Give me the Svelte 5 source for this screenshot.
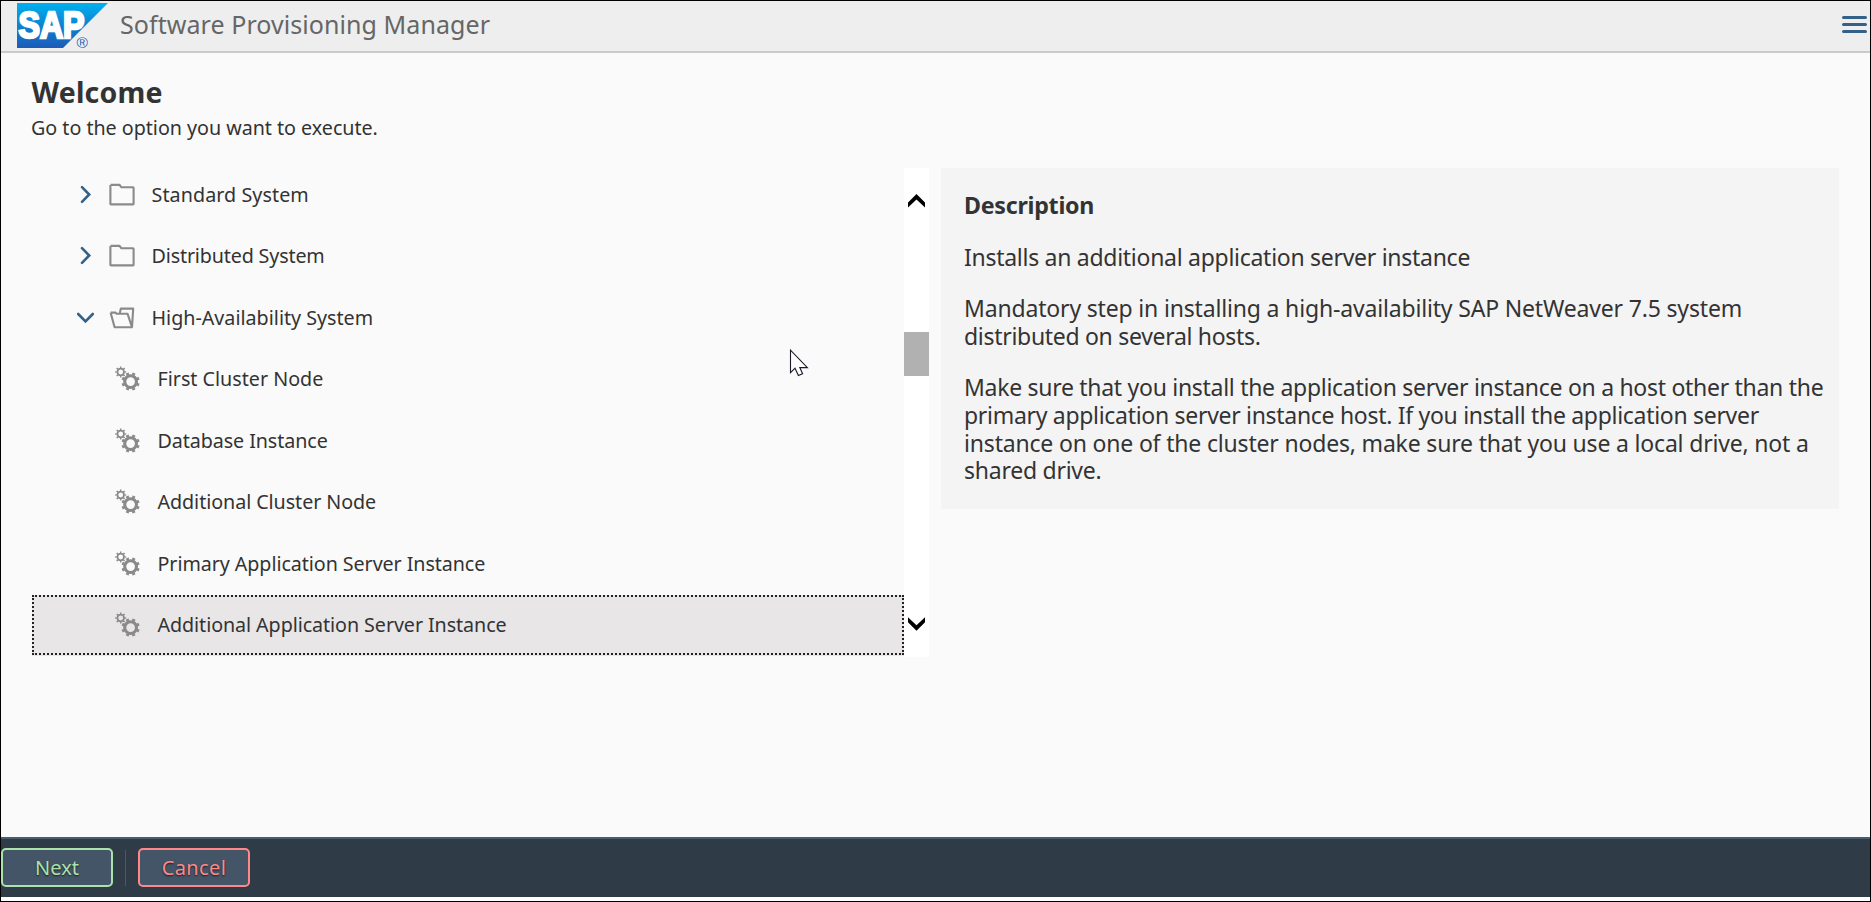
<script>
  const nodes = [
    { label: 'Standard System', kind: 'closed', track: 0.08 },
    { label: 'Distributed System', kind: 'closed', track: -0.15 },
    { label: 'High-Availability System', kind: 'open', track: 0 },
    { label: 'First Cluster Node', kind: 'task', track: 0 },
    { label: 'Database Instance', kind: 'task', track: -0.08 },
    { label: 'Additional Cluster Node', kind: 'task', track: -0.06 },
    { label: 'Primary Application Server Instance', kind: 'task', track: -0.07 },
    { label: 'Additional Application Server Instance', kind: 'task', track: -0.07 },
  ];
  let selected = $state(7);

  const paragraphs = [
    [['Installs an additional application server instance', -0.28]],
    [
      ['Mandatory step in installing a high-availability SAP NetWeaver 7.5 system', -0.17],
      ['distributed on several hosts.', -0.3],
    ],
    [
      ['Make sure that you install the application server instance on a host other than the', -0.29],
      ['primary application server instance host. If you install the application server', -0.3],
      ['instance on one of the cluster nodes, make sure that you use a local drive, not a', -0.18],
      ['shared drive.', -0.25],
    ],
  ];
</script>

<div class="window">
  <header>
    <svg class="logo" width="92" height="46" viewBox="0 0 92 46">
      <defs>
        <linearGradient id="sap" x1="0" y1="0" x2="0" y2="1">
          <stop offset="0" stop-color="#00b1ee" />
          <stop offset="0.5" stop-color="#0c83d2" />
          <stop offset="1" stop-color="#1e5bb8" />
        </linearGradient>
      </defs>
      <path d="M0 0H91L46 45H0Z" fill="url(#sap)" />
      <text class="brand" x="1.5" y="35" textLength="66" lengthAdjust="spacingAndGlyphs">SAP</text>
      <text class="reg" x="59.5" y="45">®</text>
    </svg>
    <span class="title">Software Provisioning Manager</span>
    <svg class="menu" width="25" height="18" viewBox="0 0 25 18">
      <path d="M1.5 1.5H23.5M1.5 8.5H23.5M1.5 15.5H23.5" stroke="#346187" stroke-width="3" stroke-linecap="round" />
    </svg>
  </header>

  <main>
    <h1>Welcome</h1>
    <p class="lead">Go to the option you want to execute.</p>

    <div class="columns">
      <div class="tree">
        <div class="rows">
          {#each nodes as node, i}
            <!-- svelte-ignore a11y_click_events_have_key_events, a11y_no_static_element_interactions -->
            <div class="row {node.kind}" class:selected={i === selected} onclick={() => (selected = i)}>
              {#if node.kind === 'closed'}
                <svg class="chevron" width="20" height="20" viewBox="0 0 20 20">
                  <path d="M6 2.2L13.2 9.5L6 16.8" />
                </svg>
                <svg class="icon" width="26" height="24" viewBox="0 0 26 24">
                  <path d="M1.5 1.9H10.6L12.2 4.2H24Q24.6 4.2 24.6 4.8V20.8Q24.6 21.4 24 21.4H2Q1.4 21.4 1.4 20.8V1.9" />
                </svg>
              {:else if node.kind === 'open'}
                <svg class="chevron" width="20" height="20" viewBox="0 0 20 20">
                  <path d="M2.2 6L9.5 13.3L16.8 6" />
                </svg>
                <svg class="icon" width="26" height="24" viewBox="0 0 26 24">
                  <path d="M1.6 6.6H6.4L7.6 7.8H18.6L23 21.2H5.6L1.6 6.6M10.8 7.2L11.8 2.6H24.2L23 21.2" />
                </svg>
              {:else}
                <svg class="gears" width="26" height="26" viewBox="0 0 26 26">
                  <circle cx="5.7" cy="6" r="3.3" stroke-width="1.8" />
                  <circle cx="5.7" cy="6" r="4.7" stroke-width="1.7" pathLength="80" stroke-dasharray="4 6" stroke-dashoffset="2" />
                  <circle cx="15.6" cy="15.6" r="5.9" stroke-width="3.1" />
                  <circle cx="15.6" cy="15.6" r="7.9" stroke-width="2.6" pathLength="80" stroke-dasharray="4.6 5.4" stroke-dashoffset="-2.7" />
                </svg>
              {/if}
              <span style:letter-spacing="{node.track}px">{node.label}</span>
            </div>
          {/each}
        </div>
        <div class="scrollbar">
          <svg class="up" width="17" height="14" viewBox="0 0 17 14">
            <path d="M0 8.5L8.5 0L17 8.5V13.5L8.5 5.4L0 13.5Z" />
          </svg>
          <div class="thumb"></div>
          <svg class="down" width="17" height="14" viewBox="0 0 17 14">
            <path d="M0 5.2L8.5 13.7L17 5.2V0.3L8.5 8.3L0 0.3Z" />
          </svg>
        </div>
      </div>

      <section>
        <h2>Description</h2>
        {#each paragraphs as lines}
          <p>
            {#each lines as [text, track]}
              <span style:letter-spacing="{track}px">{text}</span>
            {/each}
          </p>
        {/each}
      </section>
    </div>
  </main>

  <footer>
    <button class="next">Next</button>
    <i></i>
    <button class="cancel">Cancel</button>
  </footer>

  <svg class="cursor" width="20" height="29" viewBox="0 0 20 29">
    <path d="M1.5 1.2V23.6L6 19.2L9.4 26.6L13.6 24.8L10.8 18.6H18.4Z" fill="#fff" stroke="#1a1a28" stroke-width="1.1" />
  </svg>
</div>

<style>
  :global(body) { margin: 0; background: #fff; }
  .window {
    position: relative;
    box-sizing: border-box;
    width: 1871px;
    height: 902px;
    border: 1px solid #000;
    background: #fafafa;
    color: #333;
    font-family: "Noto Sans", sans-serif;
    display: flex;
    flex-direction: column;
    overflow: hidden;
  }
  svg { display: block; flex: none; }
  header {
    box-sizing: border-box;
    height: 52px;
    flex: none;
    display: flex;
    align-items: flex-start;
    padding: 0 3px 0 16px;
    background: #eee;
    border-bottom: 2px solid #cacaca;
  }
  .logo { margin-top: 2px; }
  .brand { font: 700 37px "Liberation Sans", sans-serif; fill: #fff; stroke: #fff; stroke-width: 2.6; }
  .reg { font: 400 15.5px "Liberation Sans", sans-serif; fill: #2261b8; }
  .title {
    margin-left: 11px;
    line-height: 46px;
    font-size: 25px;
    letter-spacing: 0.07px;
    color: #666;
  }
  .menu { margin: 15px 0 0 auto; }
  main { flex: 1; padding: 19px 31px 0; }
  h1 { margin: 0 0 0 -0.5px; font-size: 28.5px; line-height: 40px; letter-spacing: 0.2px; }
  .lead { margin: 1px 0 0 -1px; font-size: 19.7px; line-height: 30px; letter-spacing: -0.02px; }
  .columns { display: flex; align-items: flex-start; margin-top: 25px; }
  .tree { width: 897px; height: 489px; display: flex; overflow: hidden; }
  .rows { width: 872px; margin-top: -4px; }
  .row {
    box-sizing: border-box;
    height: 61.5px;
    display: flex;
    align-items: center;
    padding-left: 44px;
    font-size: 19.7px;
    line-height: 30px;
    white-space: nowrap;
  }
  .row.task { padding-left: 83px; }
  .row.selected {
    height: 60px;
    margin-top: 0.5px;
    padding-left: 81px;
    border: 2px dotted #222;
    background: #e8e6e7;
    box-shadow: 0 1px #e8e6e7;
  }
  .chevron { fill: none; stroke: #346187; stroke-width: 2.6; stroke-linecap: round; }
  .icon { margin: 0 16.5px 0 13px; fill: none; stroke: #8a8a8a; stroke-width: 2.1; stroke-linejoin: round; }
  .gears { margin: 0 16.5px 0 0; fill: none; stroke: #8a8a8a; }
  .scrollbar {
    width: 25px;
    background: #fff;
    display: flex;
    flex-direction: column;
    align-items: center;
  }
  .up { margin-top: 26px; }
  .thumb { width: 25px; height: 44px; margin-top: 124px; background: #b1b1b1; }
  .down { margin-top: auto; margin-bottom: 26px; }
  section {
    box-sizing: border-box;
    width: 898px;
    height: 341px;
    margin-left: 12px;
    padding: 24.4px 0 0 23px;
    background: #f4f4f4;
    font-size: 23px;
    line-height: 27.8px;
    white-space: nowrap;
  }
  h2 { margin: 0; font-size: 23.2px; line-height: 27.8px; letter-spacing: -0.25px; }
  section p { margin: 23.5px 0 0; }
  section span { display: block; }
  footer {
    box-sizing: border-box;
    height: 64px;
    flex: none;
    display: flex;
    align-items: flex-start;
    padding-top: 9px;
    border-top: 2px solid #475e72;
    border-bottom: 4px solid #fff;
    background: #2f3c48;
  }
  button {
    box-sizing: border-box;
    width: 112px;
    height: 39px;
    padding: 0;
    border: 2px solid;
    border-radius: 5px;
    background: #445567;
    font: 400 20px/34px "Noto Sans", sans-serif;
    text-shadow: 0 1px 2px #000a;
  }
  .next { color: #abe2ab; }
  .cancel { color: #ff8888; letter-spacing: 0.4px; }
  footer i { width: 1px; height: 36px; margin: 2px 12px 0; background: #4a5a68; }
  .cursor { position: absolute; left: 788px; top: 348px; }
</style>
